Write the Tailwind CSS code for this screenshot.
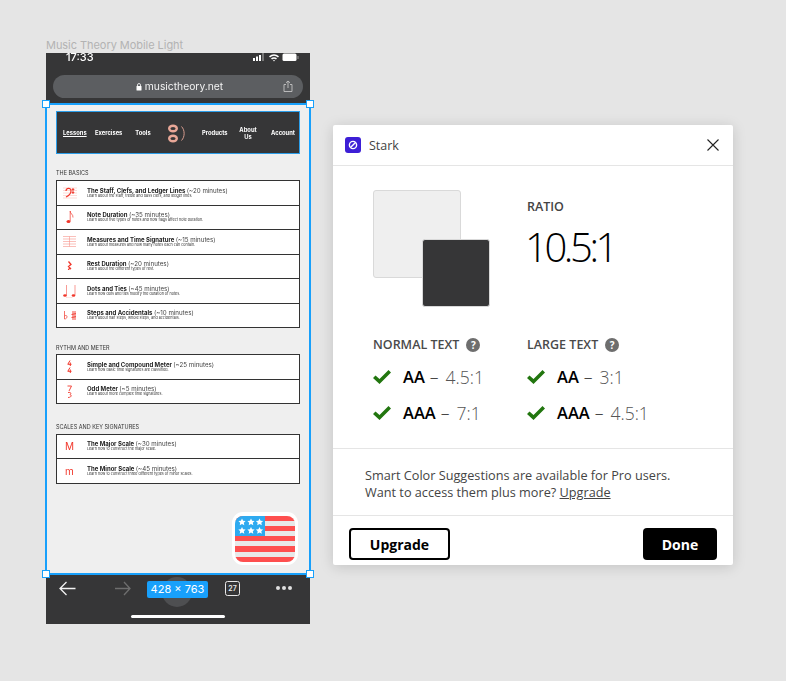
<!DOCTYPE html>
<html lang="en">
<head>
    <meta charset="UTF-8"/>
    <title>Stark contrast check</title>
    <script src="https://cdn.jsdelivr.net/npm/@tailwindcss/browser@4"></script>
</head>
<body class="bg-[#e5e5e5] font-['Inter',sans-serif]">
<div class="relative w-[786px] h-[681px] overflow-hidden">

    <!-- frame label -->
    <div class="absolute left-[46px] top-[39px] text-[11px] leading-[12px] tracking-[-0.05px] text-[#b3b3b3]">Music Theory Mobile Light</div>

    <!-- phone frame -->
    <div class="absolute left-[46px] top-[53px] w-[264px] h-[571px] bg-[#363637] flex flex-col">
        <!-- browser top -->
        <div class="h-[50px] shrink-0 relative blur-[0.3px]">
            <div class="flex items-center justify-between pl-[20px] pr-[11px] h-[8px]">
                <span class="text-[11px] leading-[8px] text-white font-medium">17:33</span>
                <svg width="46" height="9" viewBox="0 0 46 9" fill="white">
                    <rect x="0" y="5" width="2" height="3"/><rect x="3" y="3.5" width="2" height="4.5"/><rect x="6" y="2" width="2" height="6"/><rect x="9" y="0" width="2" height="8" fill="#777"/>
                    <path d="M16 3.2a8 8 0 0 1 10 0l-1 1.2a6.2 6.2 0 0 0-8 0zM18 5.3a5 5 0 0 1 6 0l-1 1.2a3.2 3.2 0 0 0-4 0zM20 7.2a2 2 0 0 1 2 0l-1 1.3z"/>
                    <rect x="29.500" y="0.500" width="14" height="7.500" rx="1.500"/><rect x="44.500" y="3" width="1" height="3" fill="#999"/>
                </svg>
            </div>
            <div class="mx-[7px] mt-[14px] h-[23px] rounded-full bg-[#5c5e61] flex items-center justify-center relative">
                <svg width="6" height="8" viewBox="0 0 6 8" class="ml-[3px] mr-[3px]" fill="white"><rect x="0.500" y="3" width="5" height="4.500" rx="0.500"/><path d="M1.500 3V2a1.500 1.500 0 0 1 3 0v1" fill="none" stroke="white" stroke-width="0.800"/></svg>
                <span class="pb-[2px] text-[10.300px] leading-[16px] text-[#f2f2f2]">musictheory.net</span>
                <svg width="10" height="12" viewBox="0 0 10 12" fill="none" stroke="#c4c4c4" stroke-width="0.900" class="absolute right-[10px] top-[5px]"><path d="M3 4.500H1v7h8v-7H7M5 8V1M3 2.800 5 1l2 1.800"/></svg>
            </div>
        </div>

        <!-- page -->
        <div class="h-[471px] shrink-0 bg-[#efefef] relative px-[10px] pt-[8px] blur-[0.35px]">
            <!-- site nav -->
            <div class="h-[43px] bg-[#363637] border border-[#2c9ee9] flex items-center pl-[6px] text-[5.800px] leading-[7px] font-bold text-white text-center whitespace-nowrap">
                <span class="w-[22px] underline underline-offset-1">Lessons</span>
                <span class="w-[27px] ml-[10px]">Exercises</span>
                <span class="w-[16px] ml-[13px]">Tools</span>
                <svg width="20" height="20" viewBox="0 0 20 20" fill="none" stroke="#e8a797" class="ml-[16px] shrink-0">
                    <ellipse cx="6" cy="5.500" rx="3.800" ry="2.800" stroke-width="2.400"/>
                    <ellipse cx="6" cy="15.500" rx="3.800" ry="2.800" stroke-width="2.400"/>
                    <path d="M14.500 3.500c3.500 3.500 3.500 10.500 0 14" stroke-width="0.900"/>
                </svg>
                <span class="w-[25px] ml-[15px]">Products</span>
                <span class="w-[18px] ml-[12px] whitespace-normal">About Us</span>
                <span class="w-[26px] ml-[13px]">Account</span>
            </div>

            <!-- the basics -->
            <div class="mt-[16px] h-[7px] text-[5.500px] leading-[7px] text-[#333]">THE BASICS</div>
            <div class="mt-[3px] border-t border-[#333]">
                <div class="h-[24.500px] bg-white border-x border-b border-[#333] flex items-center">
                    <div class="w-[30px] pr-[5px] shrink-0 flex justify-center">
                        <svg width="14" height="15" viewBox="0 0 14 15" fill="none" stroke="#f1372b"><path d="M0 3h14M0 5.500h14M0 8h14M0 10.500h14M0 13h14" stroke="#f8b4ae" stroke-width="0.500"/><path d="M3 6c0-3 5-4 5 0 0 3-3 5-5 6" stroke-width="1.200"/><circle cx="10" cy="4.500" r="0.800" fill="#f1372b"/><circle cx="10" cy="7.500" r="0.800" fill="#f1372b"/></svg>
                    </div>
                    <div class="min-w-0 whitespace-nowrap">
                        <div class="text-[6px] leading-[6px] font-bold text-[#222]">The Staff, Clefs, and Ledger Lines <span class="text-[6.200px] font-normal text-[#444]">(~20 minutes)</span></div>
                        <div class="text-[3.700px] leading-[4px] text-[#333]">Learn about the staff, treble and bass clefs, and ledger lines.</div>
                    </div>
                </div>
                <div class="h-[24.500px] bg-white border-x border-b border-[#333] flex items-center">
                    <div class="w-[30px] pr-[5px] shrink-0 flex justify-center">
                        <svg width="8" height="14" viewBox="0 0 8 14" fill="none" stroke="#f1372b"><ellipse cx="2.500" cy="11.500" rx="2" ry="1.500" fill="#f1372b" stroke="none"/><path d="M4.200 11V1c0 3 3 3 2.800 6.500" stroke-width="0.700"/></svg>
                    </div>
                    <div class="min-w-0 whitespace-nowrap">
                        <div class="text-[6px] leading-[6px] font-bold text-[#222]">Note Duration <span class="text-[6.200px] font-normal text-[#444]">(~35 minutes)</span></div>
                        <div class="text-[3.700px] leading-[4px] text-[#333]">Learn about five types of notes and how flags affect note duration.</div>
                    </div>
                </div>
                <div class="h-[24.500px] bg-white border-x border-b border-[#333] flex items-center">
                    <div class="w-[30px] pr-[5px] shrink-0 flex justify-center">
                        <svg width="13" height="13" viewBox="0 0 13 13" fill="none" stroke="#f6948c" stroke-width="0.600"><path d="M0 1.500h13M0 4h13M0 6.500h13M0 9h13M0 11.500h13M6.500 1.500v10"/></svg>
                    </div>
                    <div class="min-w-0 whitespace-nowrap">
                        <div class="text-[6px] leading-[6px] font-bold text-[#222]">Measures and Time Signature <span class="text-[6.200px] font-normal text-[#444]">(~15 minutes)</span></div>
                        <div class="text-[3.700px] leading-[4px] text-[#333]">Learn about measures and how many notes each can contain.</div>
                    </div>
                </div>
                <div class="h-[24.500px] bg-white border-x border-b border-[#333] flex items-center">
                    <div class="w-[30px] pr-[5px] shrink-0 flex justify-center">
                        <svg width="5" height="10" viewBox="0 0 5 10" fill="none" stroke="#f1372b" stroke-width="1.300"><path d="M1.500 0.500 4 3.500 1.500 5.500 4 8M3.500 8c-1-.6-2-.4-2 1"/></svg>
                    </div>
                    <div class="min-w-0 whitespace-nowrap">
                        <div class="text-[6px] leading-[6px] font-bold text-[#222]">Rest Duration <span class="text-[6.200px] font-normal text-[#444]">(~20 minutes)</span></div>
                        <div class="text-[3.700px] leading-[4px] text-[#333]">Learn about the different types of rest.</div>
                    </div>
                </div>
                <div class="h-[24.500px] bg-white border-x border-b border-[#333] flex items-center">
                    <div class="w-[30px] pr-[5px] shrink-0 flex justify-center">
                        <svg width="14" height="14" viewBox="0 0 14 14" fill="none" stroke="#f1372b"><ellipse cx="2" cy="11.500" rx="1.800" ry="1.300" fill="#f1372b" stroke="none"/><ellipse cx="10.500" cy="11.500" rx="1.800" ry="1.300" fill="#f1372b" stroke="none"/><path d="M3.500 11V1M12 11V1" stroke-width="0.500"/><path d="M3 13.300c2 .8 5 .8 6.500 0" stroke="#f8b4ae" stroke-width="0.500"/></svg>
                    </div>
                    <div class="min-w-0 whitespace-nowrap">
                        <div class="text-[6px] leading-[6px] font-bold text-[#222]">Dots and Ties <span class="text-[6.200px] font-normal text-[#444]">(~45 minutes)</span></div>
                        <div class="text-[3.700px] leading-[4px] text-[#333]">Learn how dots and ties modify the duration of notes.</div>
                    </div>
                </div>
                <div class="h-[24.500px] bg-white border-x border-b border-[#333] flex items-center">
                    <div class="w-[30px] pr-[5px] shrink-0 flex justify-center">
                        <svg width="12" height="9" viewBox="0 0 12 9" fill="none" stroke="#f1372b"><path d="M0.500 0v8c2 0 2.500-1.500 2.500-2.500S1.500 4 .5 5" stroke-width="0.700"/><path d="M9 0v9M11 0v9M7.500 3.500l5-1M7.500 6.500l5-1" stroke-width="0.900"/></svg>
                    </div>
                    <div class="min-w-0 whitespace-nowrap">
                        <div class="text-[6px] leading-[6px] font-bold text-[#222]">Steps and Accidentals <span class="text-[6.200px] font-normal text-[#444]">(~10 minutes)</span></div>
                        <div class="text-[3.700px] leading-[4px] text-[#333]">Learn about half steps, whole steps, and accidentals.</div>
                    </div>
                </div>
            </div>

            <!-- rythm and meter -->
            <div class="mt-[16.500px] h-[7px] text-[5.500px] leading-[7px] text-[#333]">RYTHM AND METER</div>
            <div class="mt-[2.500px] border-t border-[#333]">
                <div class="h-[24.500px] bg-white border-x border-b border-[#333] flex items-center">
                    <div class="w-[30px] pr-[5px] shrink-0 flex justify-center">
                        <svg width="5" height="13" viewBox="0 0 5 13" fill="none" stroke="#f1372b" stroke-width="1"><path d="M3 0.500 .8 4.300H4.500M3.300 2.500v3.500M3 7.500.8 11.300H4.500M3.300 9.500V13"/></svg>
                    </div>
                    <div class="min-w-0 whitespace-nowrap">
                        <div class="text-[6px] leading-[6px] font-bold text-[#222]">Simple and Compound Meter <span class="text-[6.200px] font-normal text-[#444]">(~25 minutes)</span></div>
                        <div class="text-[3.700px] leading-[4px] text-[#333]">Learn how basic time signatures are classified.</div>
                    </div>
                </div>
                <div class="h-[24.500px] bg-white border-x border-b border-[#333] flex items-center">
                    <div class="w-[30px] pr-[5px] shrink-0 flex justify-center">
                        <svg width="5" height="13" viewBox="0 0 5 13" fill="none" stroke="#f1372b" stroke-width="0.900"><path d="M.5 1H4.500L2 6M1 7.500c3-.5 3.500 1 2 2 2 .5 1.500 3-2 3"/></svg>
                    </div>
                    <div class="min-w-0 whitespace-nowrap">
                        <div class="text-[6px] leading-[6px] font-bold text-[#222]">Odd Meter <span class="text-[6.200px] font-normal text-[#444]">(~5 minutes)</span></div>
                        <div class="text-[3.700px] leading-[4px] text-[#333]">Learn about more complex time signatures.</div>
                    </div>
                </div>
            </div>

            <!-- scales -->
            <div class="mt-[19.500px] h-[7px] text-[5.500px] leading-[7px] text-[#333]">SCALES AND KEY SIGNATURES</div>
            <div class="mt-[3px] border-t border-[#333]">
                <div class="h-[24.500px] bg-white border-x border-b border-[#333] flex items-center">
                    <div class="w-[30px] pr-[5px] shrink-0 text-center text-[10px] leading-[12px] text-[#f1372b]">M</div>
                    <div class="min-w-0 whitespace-nowrap">
                        <div class="text-[6px] leading-[6px] font-bold text-[#222]">The Major Scale <span class="text-[6.200px] font-normal text-[#444]">(~30 minutes)</span></div>
                        <div class="text-[3.700px] leading-[4px] text-[#333]">Learn how to construct the major scale.</div>
                    </div>
                </div>
                <div class="h-[24.500px] bg-white border-x border-b border-[#333] flex items-center">
                    <div class="w-[30px] pr-[5px] shrink-0 text-center text-[10px] leading-[12px] text-[#f1372b]">m</div>
                    <div class="min-w-0 whitespace-nowrap">
                        <div class="text-[6px] leading-[6px] font-bold text-[#222]">The Minor Scale <span class="text-[6.200px] font-normal text-[#444]">(~45 minutes)</span></div>
                        <div class="text-[3.700px] leading-[4px] text-[#333]">Learn how to construct three different types of minor scales.</div>
                    </div>
                </div>
            </div>

            <!-- flag badge -->
            <div class="absolute right-[12px] bottom-[9px] w-[66px] h-[53px] bg-white rounded-[11px] flex items-center justify-center">
                <svg width="60" height="46" viewBox="0 0 60 46">
                    <defs><clipPath id="flagClip"><rect width="60" height="46" rx="8"/></clipPath></defs>
                    <g clip-path="url(#flagClip)">
                        <rect width="60" height="46" fill="#e8e8e8"/>
                        <path d="M0 0h60v5H0zM0 10h60v5H0zM0 20h60v5H0zM0 30h60v6H0zM0 41h60v5H0z" fill="#fe4f4f"/>
                        <rect width="30" height="20" fill="#2eaaf0"/>
                        <g fill="white">
                            <path id="flagStar" d="M7 2.500l1.100 2.300 2.500.3-1.800 1.700.5 2.500L7 8.100 4.700 9.300l.5-2.500-1.800-1.700 2.500-.3z"/>
                            <use href="#flagStar" x="9"/><use href="#flagStar" x="17.500"/>
                            <use href="#flagStar" y="8.500"/><use href="#flagStar" x="9" y="8.500"/><use href="#flagStar" x="17.500" y="8.500"/>
                        </g>
                    </g>
                </svg>
            </div>
        </div>

        <!-- browser bottom -->
        <div class="flex-1 relative">
            <div class="flex items-start pl-[13px] pt-[7px] h-[30px]">
                <svg width="17" height="15" viewBox="0 0 17 15" fill="none" stroke="#f2f2f2" stroke-width="1.300" class="shrink-0"><path d="M16.500 7.500H1M7.500 1 1 7.500 7.500 14"/></svg>
                <svg width="16" height="15" viewBox="0 0 16 15" fill="none" stroke="#6e6e6e" stroke-width="1.300" class="ml-[39px] shrink-0"><path d="M0 7.500h15M9 1l6 6.500L9 14"/></svg>
                <div class="w-[30px] h-[30px] ml-[31px] mt-[-4px] rounded-full shrink-0 bg-[#4e4f51]"></div>
                <div class="w-[15px] h-[15px] ml-[33px] shrink-0 rounded-[2.500px] border border-[#e8e8e8] text-[7px] leading-[13px] text-center text-[#e8e8e8] font-semibold">27</div>
                <div class="flex gap-[2px] ml-[36px] mt-[5px]">
                    <span class="w-[4px] h-[4px] rounded-full bg-[#e0e0e0]"></span>
                    <span class="w-[4px] h-[4px] rounded-full bg-[#e0e0e0]"></span>
                    <span class="w-[4px] h-[4px] rounded-full bg-[#e0e0e0]"></span>
                </div>
            </div>
            <div class="w-[94px] h-[3px] mt-[11px] ml-[85px] rounded-full bg-white"></div>
        </div>
    </div>

    <!-- figma selection -->
    <div class="absolute left-[45px] top-[102.500px] w-[266px] h-[472px] border-2 border-[#18a0fb]"></div>
    <div class="absolute left-[42px] top-[100px] w-[8px] h-[8px] bg-white border-[1.500px] border-[#18a0fb]"></div>
    <div class="absolute left-[306px] top-[100px] w-[8px] h-[8px] bg-white border-[1.500px] border-[#18a0fb]"></div>
    <div class="absolute left-[42px] top-[570px] w-[8px] h-[8px] bg-white border-[1.500px] border-[#18a0fb]"></div>
    <div class="absolute left-[306px] top-[570px] w-[8px] h-[8px] bg-white border-[1.500px] border-[#18a0fb]"></div>
    <div class="absolute left-[147px] top-[581px] w-[61px] h-[17px] rounded-[2px] bg-[#18a0fb] text-white text-[11px] leading-[17px] text-center whitespace-nowrap">428 × 763</div>

    <!-- stark dialog -->
    <div class="absolute left-[333px] top-[125px] w-[400px] h-[440px] bg-white rounded-[2px] shadow-[0_2px_14px_rgba(0,0,0,0.15)] flex flex-col font-['Open_Sans',sans-serif]">
        <div class="h-[41px] shrink-0 border-b border-[#e5e5e5] flex items-center pl-[12px] pr-[14px]">
            <div class="w-[16px] h-[16px] rounded-[3px] bg-[#3d1fd6] flex items-center justify-center">
                <svg width="10" height="10" viewBox="0 0 10 10" fill="none" stroke="white" stroke-width="1.400"><circle cx="5" cy="5" r="3.600"/><path d="M2.500 7.500l5-5"/></svg>
            </div>
            <span class="ml-[8px] pt-[1px] text-[12.500px] leading-[16px] text-[#444]">Stark</span>
            <svg width="12" height="12" viewBox="0 0 12 12" fill="none" stroke="#222" stroke-width="1.100" class="ml-auto"><path d="M.5.500l11 11M11.500.500l-11 11"/></svg>
        </div>

        <div class="h-[283px] shrink-0 border-b border-[#e5e5e5] pl-[40px] pt-[24px]">
            <div class="flex h-[145px]">
                <div class="relative w-[154px]">
                    <div class="w-[88px] h-[88px] rounded-[3px] bg-[#efefef] border border-[#d9d9d9]"></div>
                    <div class="absolute left-[49px] top-[49px] w-[68px] h-[68px] rounded-[3px] bg-[#363637] border border-[#d9d9d9]"></div>
                </div>
                <div class="pt-[9px]">
                    <div class="text-[12.500px] leading-[16px] font-semibold text-[#444]">RATIO</div>
                    <div class="mt-[7px] ml-[-2px] text-[40px] leading-[50px] font-light text-black tracking-[-3.400px]">10.5:1</div>
                </div>
            </div>
            <div class="flex">
                <div class="w-[154px]">
                    <div class="flex items-center h-[20px] text-[12.500px] font-semibold text-[#4a4a4a]">NORMAL TEXT
                        <span class="ml-[7px] w-[14px] h-[14px] rounded-full bg-[#6e6e6e] text-white text-[10px] leading-[14px] font-bold text-center">?</span>
                    </div>
                    <div class="flex items-center h-[36px] mt-[4px]">
                        <svg width="18" height="14" viewBox="0 0 18 14" fill="#22760f"><path d="M0 8 2.500 5.500 6.500 9 15.500 0 18 2.500 6.500 14z"/></svg>
                        <span class="ml-[12px] text-[16.500px] font-semibold text-black">AA</span><span class="ml-[5px] text-[17.500px] font-light text-[#333]">–</span><span class="ml-[7px] text-[17.500px] font-light text-[#555]">4.5:1</span>
                    </div>
                    <div class="flex items-center h-[36px]">
                        <svg width="18" height="14" viewBox="0 0 18 14" fill="#22760f"><path d="M0 8 2.500 5.500 6.500 9 15.500 0 18 2.500 6.500 14z"/></svg>
                        <span class="ml-[12px] text-[16.500px] font-semibold text-black">AAA</span><span class="ml-[5px] text-[17.500px] font-light text-[#333]">–</span><span class="ml-[7px] text-[17.500px] font-light text-[#555]">7:1</span>
                    </div>
                </div>
                <div>
                    <div class="flex items-center h-[20px] text-[12.500px] font-semibold text-[#4a4a4a]">LARGE TEXT
                        <span class="ml-[7px] w-[14px] h-[14px] rounded-full bg-[#6e6e6e] text-white text-[10px] leading-[14px] font-bold text-center">?</span>
                    </div>
                    <div class="flex items-center h-[36px] mt-[4px]">
                        <svg width="18" height="14" viewBox="0 0 18 14" fill="#22760f"><path d="M0 8 2.500 5.500 6.500 9 15.500 0 18 2.500 6.500 14z"/></svg>
                        <span class="ml-[12px] text-[16.500px] font-semibold text-black">AA</span><span class="ml-[5px] text-[17.500px] font-light text-[#333]">–</span><span class="ml-[7px] text-[17.500px] font-light text-[#555]">3:1</span>
                    </div>
                    <div class="flex items-center h-[36px]">
                        <svg width="18" height="14" viewBox="0 0 18 14" fill="#22760f"><path d="M0 8 2.500 5.500 6.500 9 15.500 0 18 2.500 6.500 14z"/></svg>
                        <span class="ml-[12px] text-[16.500px] font-semibold text-black">AAA</span><span class="ml-[5px] text-[17.500px] font-light text-[#333]">–</span><span class="ml-[7px] text-[17.500px] font-light text-[#555]">4.5:1</span>
                    </div>
                </div>
            </div>
        </div>

        <div class="h-[67px] shrink-0 border-b border-[#e5e5e5] pl-[32px] pt-[17.500px] text-[12.700px] leading-[17px] text-[#444] whitespace-nowrap">
            <p>Smart Color Suggestions are available for Pro users.</p>
            <p>Want to access them plus more? <span class="underline">Upgrade</span></p>
        </div>

        <div class="flex-1 flex items-start justify-between pl-[16px] pr-[16px] pt-[12px]">
            <button class="w-[101px] h-[32px] rounded-[4px] border-2 border-black bg-white text-[14px] font-bold text-black">Upgrade</button>
            <button class="w-[74px] h-[32px] rounded-[4px] bg-black text-[14px] font-bold text-white">Done</button>
        </div>
    </div>
</div>
</body>
</html>
